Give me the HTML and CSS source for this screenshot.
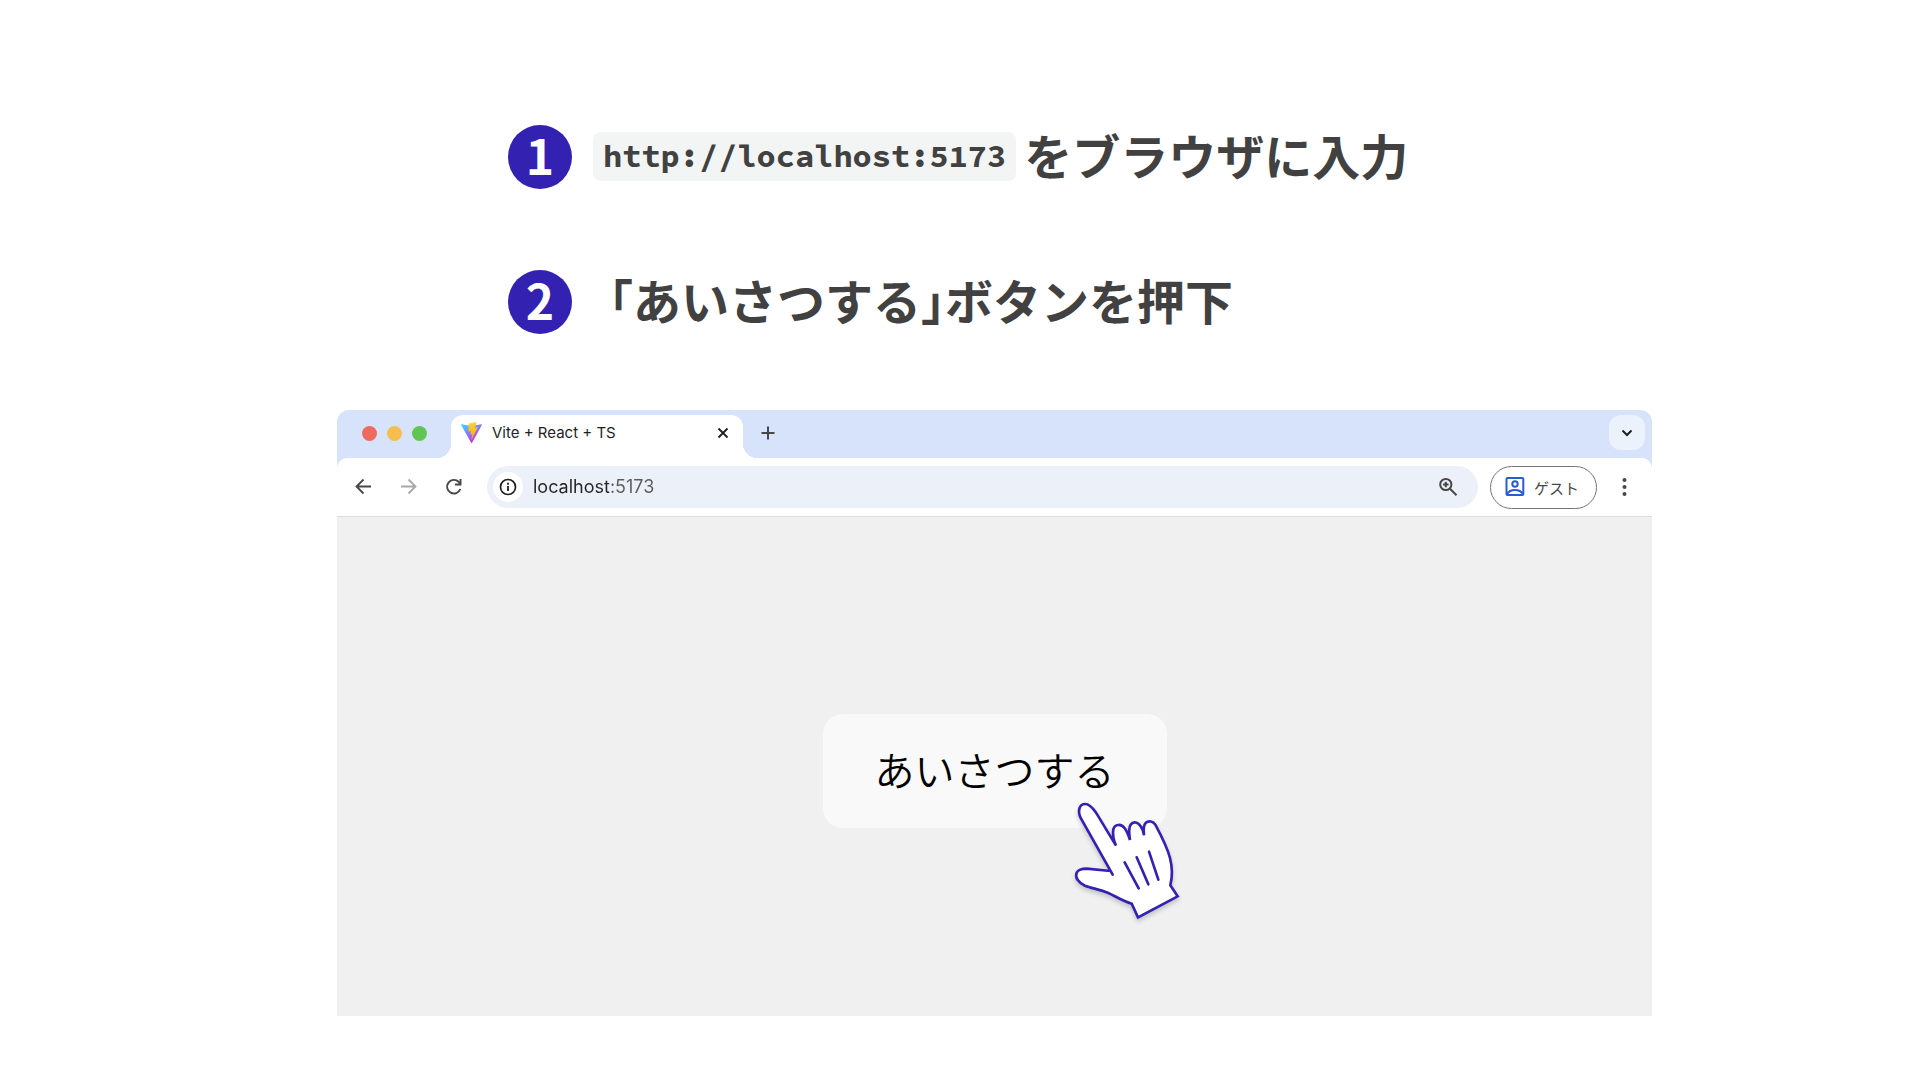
FILE: index.html
```html
<!DOCTYPE html>
<html lang="ja">
<head>
<meta charset="utf-8">
<meta name="viewport" content="width=device-width, initial-scale=1">
<title>Vite + React + TS</title>
<link rel="stylesheet" href="styles.css">
</head>
<body>
<main class="slide">
  <ol class="steps">
    <li class="step">
      <span class="step-number">1</span>
      <p class="step-text"><code class="code">http://localhost:5173</code><span>をブラウザに入力</span></p>
    </li>
    <li class="step">
      <span class="step-number">2</span>
      <p class="step-text step-text-plain">「あいさつする」ボタンを押下</p>
    </li>
  </ol>

  <section class="browser">
    <header class="tab-strip">
      <div class="lights">
        <span class="light light-close"></span>
        <span class="light light-minimize"></span>
        <span class="light light-zoom"></span>
      </div>
      <div class="tab">
        <svg class="favicon" viewBox="0 0 256 257" aria-hidden="true">
          <defs>
            <linearGradient id="vite-body" x1="0" y1="0.1" x2="0.6" y2="0.9"><stop offset="0" stop-color="#41d1ff"/><stop offset="1" stop-color="#bd34fe"/></linearGradient>
            <linearGradient id="vite-bolt" x1="0.4" y1="0" x2="0.5" y2="1"><stop offset="0" stop-color="#ffd95a"/><stop offset="0.1" stop-color="#ffcf35"/><stop offset="1" stop-color="#ffa800"/></linearGradient>
          </defs>
          <path fill="url(#vite-body)" d="M255.153 37.938 134.897 252.976c-2.483 4.44-8.862 4.466-11.382.048L.875 37.958c-2.746-4.814 1.371-10.646 6.827-9.67l120.385 21.517a6.537 6.537 0 0 0 2.322-.004l117.867-21.483c5.438-.991 9.574 4.796 6.877 9.62Z"/>
          <path fill="url(#vite-bolt)" d="M185.432.063 96.44 17.501a3.268 3.268 0 0 0-2.634 3.014l-5.474 92.456a3.268 3.268 0 0 0 3.997 3.378l24.777-5.718c2.318-.535 4.413 1.507 3.936 3.838l-7.361 36.047c-.495 2.426 1.782 4.5 4.151 3.78l15.304-4.649c2.372-.72 4.652 1.36 4.15 3.788l-11.698 56.621c-.732 3.542 3.979 5.473 5.943 2.437l1.313-2.028 72.516-144.72c1.215-2.423-.88-5.186-3.54-4.672l-25.505 4.922c-2.396.462-4.435-1.77-3.759-4.114l16.646-57.705c.677-2.35-1.37-4.583-3.769-4.113Z"/>
        </svg>
        <span class="tab-title">Vite + React + TS</span>
        <button class="icon-button" type="button" aria-label="タブを閉じる">
          <svg class="icon" viewBox="0 0 20 20"><path d="M5.5 5.5l9 9M14.500 5.500l-9 9" stroke="#1f1f1f" stroke-width="1.800"/></svg>
        </button>
      </div>
      <button class="icon-button new-tab" type="button" aria-label="新しいタブ">
        <svg class="icon" viewBox="0 0 20 20"><path d="M10 3.500v13M3.500 10h13" stroke="#474747" stroke-width="2"/></svg>
      </button>
      <button class="tab-search" type="button" aria-label="タブを検索">
        <svg class="icon" viewBox="0 0 20 20"><path d="M5.500 7.500l4.500 4.500 4.500-4.500" stroke="#1f1f1f" stroke-width="2"/></svg>
      </button>
    </header>

    <div class="toolbar">
      <nav class="nav">
        <button class="icon-button" type="button" aria-label="戻る">
          <svg class="icon" viewBox="0 0 20 20"><path d="M17 9.500H3M9.500 2.500l-7 7 7 7" stroke="#474747" stroke-width="1.800"/></svg>
        </button>
        <button class="icon-button" type="button" aria-label="進む">
          <svg class="icon" viewBox="0 0 20 20"><path d="M2 9.500h14M9.500 2.500l7 7-7 7" stroke="#a8a8a8" stroke-width="1.800"/></svg>
        </button>
        <button class="icon-button" type="button" aria-label="再読み込み">
          <svg class="icon" viewBox="0 0 20 20"><path d="M16.300 12A6.800 6.800 0 1 1 14.800 5l1.500 1.600" stroke="#474747" stroke-width="1.900"/><path d="M16.500 2v5.500H11" stroke="#474747" stroke-width="1.900"/></svg>
        </button>
      </nav>
      <div class="address">
        <button class="site-info" type="button" aria-label="サイト情報を表示">
          <svg class="icon" viewBox="0 0 20 20"><circle cx="10" cy="10" r="7.500" stroke="#1f1f1f" stroke-width="1.700"/><path d="M10 9v5M10 5.800v1.900" stroke="#1f1f1f" stroke-width="1.800"/></svg>
        </button>
        <input class="url" type="text" value="localhost:5173" aria-label="アドレス" spellcheck="false">
        <button class="icon-button" type="button" aria-label="ズーム">
          <svg class="icon" viewBox="0 0 20 20"><circle cx="7.800" cy="7.500" r="5.600" stroke="#474747" stroke-width="2"/><path d="M12 11.700l6.500 6.500M7.800 4.700v5.600M5 7.500h5.600" stroke="#474747" stroke-width="2"/></svg>
        </button>
      </div>
      <button class="profile" type="button">
        <svg class="icon" viewBox="0 0 20 20"><rect x="1.500" y="1" width="16.800" height="17" rx="1" stroke="#2a5bd0" stroke-width="2"/><circle cx="10" cy="7" r="2.700" stroke="#2a5bd0" stroke-width="2"/><path d="M2 17c2-3.200 5-4 8-4s6 .8 8 4" stroke="#2a5bd0" stroke-width="2"/></svg>
        <span>ゲスト</span>
      </button>
      <button class="icon-button" type="button" aria-label="メニュー">
        <svg class="icon" viewBox="0 0 20 20"><g fill="#474747"><circle cx="10.500" cy="3" r="2"/><circle cx="10.500" cy="10" r="2"/><circle cx="10.500" cy="17" r="2"/></g></svg>
      </button>
    </div>

    <div class="page">
      <div class="greet-wrap">
        <button class="greet" type="button">あいさつする</button>
        <svg class="hand" viewBox="0 0 390 420" aria-hidden="true">
          <path fill="#fff" d="M158 254L62 84C52 62 58 42 76 42C92 42 102 60 110 71L168 167C160 150 158 130 160 118C164 102 184 100 194 115C202 126 206 138 210 150C207 130 206 112 212 104C220 93 234 96 242 109C248 118 252 128 252 136C250 118 252 104 257 99C266 90 280 94 286 104C300 130 324 180 330 204C338 235 337 262 331 286L353 319L234 382L215 341C190 334 165 318 145 309C120 298 95 295 75 287C55 278 44 262 50 248C56 237 68 236 80 236L152 243"/>
          <path d="M194 217L236 295M230 202L265 283M267 185L295 269"/>
        </svg>
      </div>
    </div>
  </section>
</main>
</body>
</html>
```
FILE: styles.css
```css
* {
  box-sizing: border-box;
}

body {
  margin: 0;
  background: #fff;
  font-family: "Noto Sans CJK JP", sans-serif;
}

button {
  padding: 0;
  border: 0;
  background: none;
  font: inherit;
}

.slide {
  display: flex;
  flex-direction: column;
  gap: 76px;
  min-height: 100vh;
  padding: 125px 268px 64px 337px;
}

/* Instructions */

.steps {
  display: flex;
  flex-direction: column;
  gap: 81px;
  margin: 0;
  padding: 0 0 0 171px;
  list-style: none;
}

.step {
  display: flex;
  align-items: flex-start;
  gap: 21px;
  color: #414141;
  font-size: 48px;
  font-weight: 700;
  line-height: 58px;
}

.step-number {
  flex: none;
  width: 64px;
  height: 64px;
  border-radius: 50%;
  background: #3322b2;
  color: #fff;
  text-align: center;
}

.step-text {
  display: flex;
  align-items: flex-start;
  gap: 8px;
  margin: 0;
  font-feature-settings: "halt";
  white-space: nowrap;
}

.step-text-plain {
  padding-left: 16px;
}

.code {
  margin-top: 7px;
  padding: 0 10px;
  border-radius: 8px;
  background: #f3f5f4;
  font-family: "Source Code Pro", "DejaVu Sans Mono", monospace;
  font-size: 32px;
  line-height: 49px;
}

/* Browser window */

.browser {
  display: flex;
  flex: 1;
  flex-direction: column;
  overflow: hidden;
  border-radius: 12px 12px 0 0;
  background: #d7e2fb;
  font-family: Inter, "Noto Sans CJK JP", sans-serif;
}

.icon {
  display: block;
  width: 20px;
  height: 20px;
  fill: none;
}

.icon-button {
  flex: none;
  width: 20px;
  height: 20px;
}

.tab-strip {
  display: flex;
  align-items: flex-start;
  height: 48px;
  padding: 5px 7px 0 25px;
}

.lights {
  display: flex;
  gap: 10px;
  padding: 11px 24px 0 0;
}

.light {
  width: 15px;
  height: 15px;
  border-radius: 50%;
}

.light-close {
  background: #ed6a5e;
}

.light-minimize {
  background: #f5bf4f;
}

.light-zoom {
  background: #61c554;
}

.tab {
  position: relative;
  display: flex;
  align-items: center;
  width: 292px;
  height: 43px;
  padding: 0 10px 8px;
  border-radius: 12px 12px 0 0;
  background: #fff;
}

.tab::before,
.tab::after {
  position: absolute;
  bottom: 0;
  width: 14px;
  height: 14px;
  content: "";
}

.tab::before {
  right: 100%;
  background: radial-gradient(circle at 0 0, transparent 14px, #fff 14px);
}

.tab::after {
  left: 100%;
  background: radial-gradient(circle at 100% 0, transparent 14px, #fff 14px);
}

.favicon {
  width: 21px;
  height: 21px;
}

.tab-title {
  flex: 1;
  padding-left: 10px;
  color: #1f1f1f;
  font-size: 15px;
}

.new-tab {
  margin: 8px 0 0 15px;
}

.tab-search {
  display: grid;
  place-items: center;
  width: 36px;
  height: 35px;
  margin-left: auto;
  border-radius: 12px;
  background: #ecf2fc;
}

.toolbar {
  display: flex;
  align-items: center;
  height: 59px;
  padding: 0 18px 0 17px;
  border-bottom: 1px solid #dcdcdc;
  border-radius: 10px 10px 0 0;
  background: #fff;
}

.nav {
  display: flex;
  gap: 25px;
  margin-right: 23px;
}

.address {
  display: flex;
  flex: 1;
  align-items: center;
  height: 42px;
  margin-right: 12px;
  padding: 0 20px 0 6px;
  border-radius: 21px;
  background: #ecf1f9;
}

.site-info {
  display: grid;
  flex: none;
  place-items: center;
  width: 30px;
  height: 30px;
  border-radius: 50%;
  background: #fff;
}

.url {
  flex: 1;
  min-width: 0;
  padding: 0 0 0 10px;
  border: 0;
  /* Host name in a darker tone than the port */
  background: linear-gradient(90deg, #242424 86px, #5c5c5c 86px);
  background-clip: text;
  color: transparent;
  font: 400 18px/24px Inter, sans-serif;
  outline: none;
}

.profile {
  display: flex;
  align-items: center;
  gap: 9px;
  width: 107px;
  height: 43px;
  margin-right: 17px;
  padding-left: 14px;
  border: 1px solid #747474;
  border-radius: 22px;
  color: #474747;
  font-size: 15px;
}

/* Page inside the window */

.page {
  display: grid;
  flex: 1;
  place-items: center;
  min-height: 340px;
  padding-top: 8px;
  background: #f0f0f0;
}

.greet-wrap {
  position: relative;
}

.greet {
  display: block;
  padding: 26px 52px 30px;
  border-radius: 20px;
  background: #f9f9f9;
  color: #000;
  font-family: "Noto Sans CJK JP", sans-serif;
  font-size: 40px;
  font-weight: 350;
  line-height: 58px;
}

.hand {
  position: absolute;
  top: 76px;
  left: 237px;
  width: 130px;
  height: 140px;
  overflow: visible;
  fill: none;
  stroke: #3322b2;
  stroke-width: 8;
  stroke-linecap: round;
  filter: drop-shadow(0 3px 2px rgb(0 0 0 / 18%));
}
```
